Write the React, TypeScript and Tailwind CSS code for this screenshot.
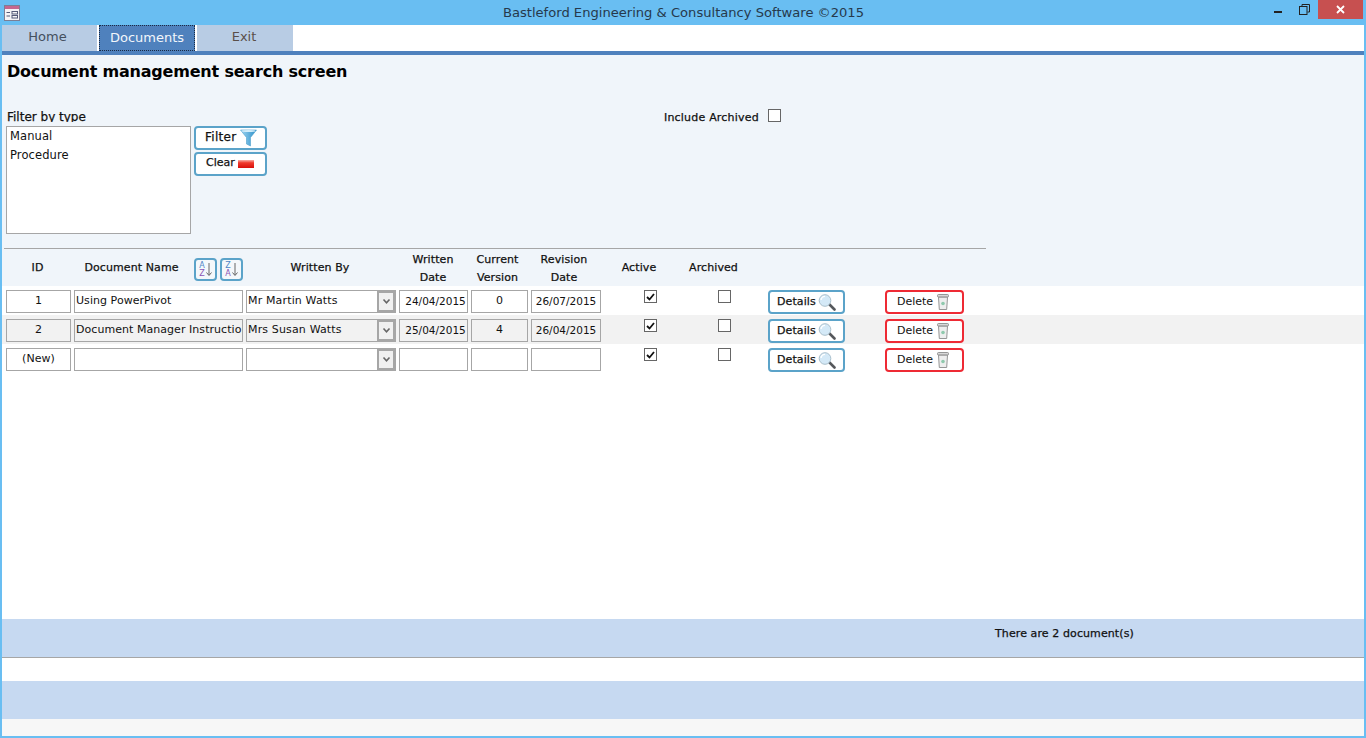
import React from "react";

const font = "font-['DejaVu_Sans','Liberation_Sans',sans-serif]";
const heavy = "[-webkit-text-stroke:0.25px_#111]";

function Funnel() {
  return (
    <svg width="17" height="18" viewBox="0 0 17 18" className="shrink-0">
      <defs>
        <linearGradient id="fn" x1="0" y1="0" x2="1" y2="0">
          <stop offset="0" stopColor="#9fd6f2" />
          <stop offset="1" stopColor="#2b8fc9" />
        </linearGradient>
      </defs>
      <path d="M0.5 1 H16.5 L10.5 8.5 V17 L6.5 15 V8.5 Z" fill="url(#fn)" stroke="#4d9fcc" strokeWidth="0.6" />
      <ellipse cx="8.5" cy="2" rx="7" ry="1" fill="#d5eefa" />
    </svg>
  );
}

function RedBar() {
  return (
    <svg width="16" height="8" viewBox="0 0 16 8" className="shrink-0">
      <defs>
        <linearGradient id="rb" x1="0" y1="0" x2="0" y2="1">
          <stop offset="0" stopColor="#f8b0a8" />
          <stop offset="0.35" stopColor="#f03a2c" />
          <stop offset="1" stopColor="#d80f0a" />
        </linearGradient>
      </defs>
      <rect width="16" height="8" fill="url(#rb)" />
    </svg>
  );
}

function Magnifier() {
  return (
    <svg width="18" height="17" viewBox="0 0 18 17" className="shrink-0">
      <line x1="11" y1="10" x2="16.5" y2="15.5" stroke="#55585c" strokeWidth="2.6" strokeLinecap="round" />
      <circle cx="7" cy="6.5" r="5.8" fill="#d4e9f7" stroke="#a9bfcc" strokeWidth="1" />
      <path d="M3 6 A4.2 4.2 0 0 1 7 2.4" fill="none" stroke="#ffffff" strokeWidth="1.4" />
    </svg>
  );
}

function Trash() {
  return (
    <svg width="12" height="16" viewBox="0 0 12 16" className="shrink-0">
      <rect x="0.5" y="0.5" width="11" height="2.6" rx="1" fill="#d8d8d8" stroke="#808080" strokeWidth="0.8" />
      <path d="M1.5 3.2 H10.5 L9.7 15.5 H2.3 Z" fill="#eeeeee" stroke="#8a8a8a" strokeWidth="0.9" />
      <circle cx="6" cy="9.5" r="1.8" fill="#8fc9ad" />
    </svg>
  );
}

function SortIcon({ top, bottom }: { top: string; bottom: string }) {
  return (
    <div className="flex h-[23px] w-[23px] items-center justify-center rounded-[4px] border-2 border-[#5ba3c9] bg-[#f4f8fb]">
      <div className={`${font} flex flex-col items-center text-[8px] leading-[8px]`}>
        <span className="text-[#4f86c6]">{top}</span>
        <span className="text-[#8a55b5]">{bottom}</span>
      </div>
      <svg width="6" height="14" viewBox="0 0 6 14" className="ml-[1px]">
        <path d="M3 0 V12 M0.5 9.5 L3 12.5 L5.5 9.5" fill="none" stroke="#666" strokeWidth="1" />
      </svg>
    </div>
  );
}

function Field({
  w,
  value,
  center,
  shaded,
  date,
  offset,
}: {
  w: string;
  value?: string;
  center?: boolean;
  shaded?: boolean;
  date?: boolean;
  offset?: boolean;
}) {
  return (
    <div
      className={`${w} h-[23px] shrink-0 overflow-hidden whitespace-nowrap border border-[#a6a6a6] pr-[1px] leading-[20px] text-[#111] ${
        date ? "text-[10.5px]" : "text-[11px] tracking-[0.05px]"
      } ${shaded ? "bg-[#f2f2f2]" : "bg-white"} ${center ? "text-center" : ""} ${offset ? "pl-[5px]" : "pl-[1px]"}`}
    >
      {value}
    </div>
  );
}

function Combo({ value, shaded }: { value?: string; shaded?: boolean }) {
  return (
    <div
      className={`flex h-[23px] w-[150px] shrink-0 items-stretch justify-between border border-[#a6a6a6] text-[11px] leading-[20px] tracking-[0.15px] text-[#111] ${
        shaded ? "bg-[#f2f2f2]" : "bg-white"
      }`}
    >
      <span className="overflow-hidden whitespace-nowrap pl-[1px]">{value}</span>
      <div className="flex w-[18px] shrink-0 items-center justify-center border-2 border-[#a6a6a6] bg-[#f0f0f0]">
        <svg width="9" height="7" viewBox="0 0 9 7">
          <path d="M1.5 1.5 L4.5 4.8 L7.5 1.5" fill="none" stroke="#666" strokeWidth="1.6" />
        </svg>
      </div>
    </div>
  );
}

function Check({ checked }: { checked?: boolean }) {
  return (
    <div className="flex h-[13px] w-[13px] items-center justify-center border border-[#666] bg-white">
      {checked && (
        <svg width="9" height="8" viewBox="0 0 9 8">
          <path d="M1 4 L3.5 6.5 L8 1" fill="none" stroke="#111" strokeWidth="1.8" />
        </svg>
      )}
    </div>
  );
}

function ActionButton({ kind }: { kind: "details" | "delete" }) {
  const details = kind === "details";
  return (
    <div
      className={`flex h-6 items-center rounded-[4px] border-2 bg-white text-[11px] leading-none text-[#111] ${
        details ? `w-[77px] border-[#5ba3c9] pl-[7px] tracking-[0.1px] ${heavy}` : "w-[79px] border-[#ee2a34] pl-[10px]"
      }`}
    >
      <span className="mr-[2px] pb-[2px]">{details ? "Details" : "Delete"}</span>
      <span className={details ? "" : "ml-[2px]"}>{details ? <Magnifier /> : <Trash />}</span>
    </div>
  );
}

function Row({
  id,
  name,
  by,
  written,
  version,
  revision,
  shaded,
}: {
  id: string;
  name?: string;
  by?: string;
  written?: string;
  version?: string;
  revision?: string;
  shaded?: boolean;
}) {
  return (
    <div className={`flex h-[29px] items-start pl-[4px] pt-[4px] ${shaded ? "bg-[#f2f2f2]" : "bg-white"}`}>
      <div className="flex gap-[3px]">
        <Field w="w-[65px]" value={id} center shaded={shaded} />
        <Field w="w-[169px]" value={name} shaded={shaded} />
        <Combo value={by} shaded={shaded} />
        <Field w="w-[69px]" value={written} center shaded={shaded} date offset />
        <Field w="w-[57px]" value={version} center shaded={shaded} />
        <Field w="w-[70px]" value={revision} center shaded={shaded} date />
      </div>
      <div className="ml-[43px]">
        <Check checked />
      </div>
      <div className="ml-[61px]">
        <Check />
      </div>
      <div className="ml-[37px]">
        <ActionButton kind="details" />
      </div>
      <div className="ml-[40px]">
        <ActionButton kind="delete" />
      </div>
    </div>
  );
}

function Heading({ w, children }: { w: string; children: React.ReactNode }) {
  return (
    <div className={`${w} shrink-0 text-center text-[11px] leading-[18px] tracking-[0.1px] text-[#111] ${heavy}`}>
      {children}
    </div>
  );
}

export default function App() {
  return (
    <div className={`${font} flex h-[738px] w-[1366px] flex-col overflow-hidden bg-[#69bef2]`}>
      {/* Title bar */}
      <div className="flex h-[25px] shrink-0 items-center">
        <svg width="16" height="16" viewBox="0 0 16 16" className="ml-[4px] shrink-0">
          <rect x="0.5" y="0.5" width="15" height="15" fill="#f5f3f6" stroke="#7c7f95" />
          <rect x="1" y="1" width="14" height="3" fill="#c6678f" />
          <path d="M2.5 7.5 H6 M2.5 11 H6" stroke="#555a78" strokeWidth="1.2" />
          <rect x="8" y="6.5" width="5.5" height="2.5" fill="none" stroke="#555a78" />
          <rect x="8" y="10.5" width="5.5" height="2.5" fill="none" stroke="#555a78" />
        </svg>
        <div className="flex-1 whitespace-nowrap pl-[73px] pt-[1px] text-center text-[13.1px] font-normal text-[#26394c]">
          Bastleford Engineering &amp; Consultancy Software ©2015
        </div>
        <div className="-mt-[6px] flex h-[19px] items-center">
          <div className="mr-[17px] mt-[5px] h-[2px] w-[8px] bg-[#222]" />
          <svg width="11" height="11" viewBox="0 0 11 11" className="mr-[8px] -mt-[1px]">
            <rect x="0.5" y="2.5" width="7.5" height="8" fill="#69bef2" stroke="#222" />
            <path d="M3 2 V0.5 H10.5 V8 H8.5" fill="none" stroke="#222" />
          </svg>
          <div className="flex h-[19px] w-[45px] items-center justify-center bg-[#c75050]">
            <svg width="9" height="9" viewBox="0 0 9 9">
              <path d="M1 1 L8 8 M8 1 L1 8" stroke="#fff" strokeWidth="1.8" />
            </svg>
          </div>
        </div>
        <div className="w-[3px]" />
      </div>

      {/* Client area */}
      <div className="mx-[2px] mb-[2px] flex min-h-0 flex-1 flex-col bg-white">
        {/* Tabs */}
        <div className="flex h-[26px] shrink-0 gap-[2px] text-[13px] leading-[24px]">
          <div className="w-[95px] bg-[#b8cce4] pr-[4px] text-center text-[#44505e]">Home</div>
          <div className="w-[96px] border border-dotted border-[#1a2a44] bg-[#4f81bd] text-center leading-[23px] text-[#f2f6fb]">
            Documents
          </div>
          <div className="w-[96px] bg-[#b8cce4] pr-[2px] text-center text-[#5a4f4a]">Exit</div>
        </div>
        <div className="h-[4px] shrink-0 bg-[#4f81bd]" />

        {/* Form header */}
        <div className="h-[231px] shrink-0 overflow-hidden bg-[#f0f5fa]">
          <h1 className="whitespace-nowrap pl-[5px] pt-[5px] text-[16px] font-bold leading-[24px] tracking-[-0.2px] text-black">
            Document management search screen
          </h1>
          <div className="mt-[25px] flex items-start pl-[5px]">
            <div className={`h-[13px] w-[300px] overflow-hidden text-[12px] leading-[16px] text-[#111] ${heavy}`}>
              Filter by type
            </div>
            <div className={`ml-[357px] pt-[1px] text-[11px] leading-[15px] tracking-[0.2px] text-[#111] ${heavy}`}>
              Include Archived
            </div>
            <div className="ml-[9px]">
              <Check />
            </div>
          </div>
          <div className="mt-[1px] flex pl-[4px]">
            <div className="h-[108px] w-[185px] border border-[#a6a6a6] bg-white pl-[3px] text-[11.5px] leading-[19px] tracking-[0.1px] text-[#111]">
              <div>Manual</div>
              <div>Procedure</div>
            </div>
            <div className="ml-[3px] flex flex-col gap-[2px]">
              <div className={`flex h-6 w-[73px] items-center gap-[3px] rounded-[4px] border-2 border-[#5ba3c9] bg-white pl-[9px] text-[12px] tracking-[0.3px] text-[#111] ${heavy}`}>
                <span className="pb-[2px]">Filter</span>
                <Funnel />
              </div>
              <div className={`flex h-6 w-[73px] items-center gap-[3px] rounded-[4px] border-2 border-[#5ba3c9] bg-white pl-[10px] text-[11px] text-[#111] ${heavy}`}>
                <span className="pb-[2px]">Clear</span>
                <RedBar />
              </div>
            </div>
          </div>
          <div className="ml-[2px] mt-[14px] h-px w-[982px] bg-[#a6a6a6]" />
          <div className="flex h-[32px] items-start overflow-hidden pl-[4px] pt-[2px]">
            <Heading w="w-[63px]"><span className="mt-[8px] block">ID</span></Heading>
            <Heading w="w-[125px]"><span className="mt-[8px] block">Document Name</span></Heading>
            <div className="mt-[7px] flex gap-[3px]">
              <SortIcon top="A" bottom="Z" />
              <SortIcon top="Z" bottom="A" />
            </div>
            <Heading w="w-[154px]"><span className="mt-[8px] block">Written By</span></Heading>
            <Heading w="w-[72px]">Written<br />Date</Heading>
            <Heading w="w-[57px]">Current<br />Version</Heading>
            <Heading w="w-[76px]">Revision<br />Date</Heading>
            <Heading w="w-[74px]"><span className="mt-[8px] block">Active</span></Heading>
            <Heading w="w-[75px]"><span className="mt-[8px] block">Archived</span></Heading>
          </div>
        </div>

        {/* Rows */}
        <div className="flex flex-col">
          <Row id="1" name="Using PowerPivot" by="Mr Martin Watts" written="24/04/2015" version="0" revision="26/07/2015" />
          <Row id="2" name="Document Manager Instructions" by="Mrs Susan Watts" written="25/04/2015" version="4" revision="26/04/2015" shaded />
          <Row id="(New)" />
        </div>

        <div className="min-h-0 flex-1" />

        {/* Footer */}
        <div className={`h-[39px] shrink-0 border-b border-[#a6a6a6] bg-[#c6d9f1] pl-[993px] pt-[7px] text-[11px] leading-[16px] tracking-[0.1px] text-[#111] ${heavy}`}>
          There are 2 document(s)
        </div>
        <div className="h-[23px] shrink-0 bg-white" />
        <div className="h-[38px] shrink-0 bg-[#c6d9f1]" />
        <div className="h-[17px] shrink-0 bg-[#f7f7f7]" />
      </div>
    </div>
  );
}
